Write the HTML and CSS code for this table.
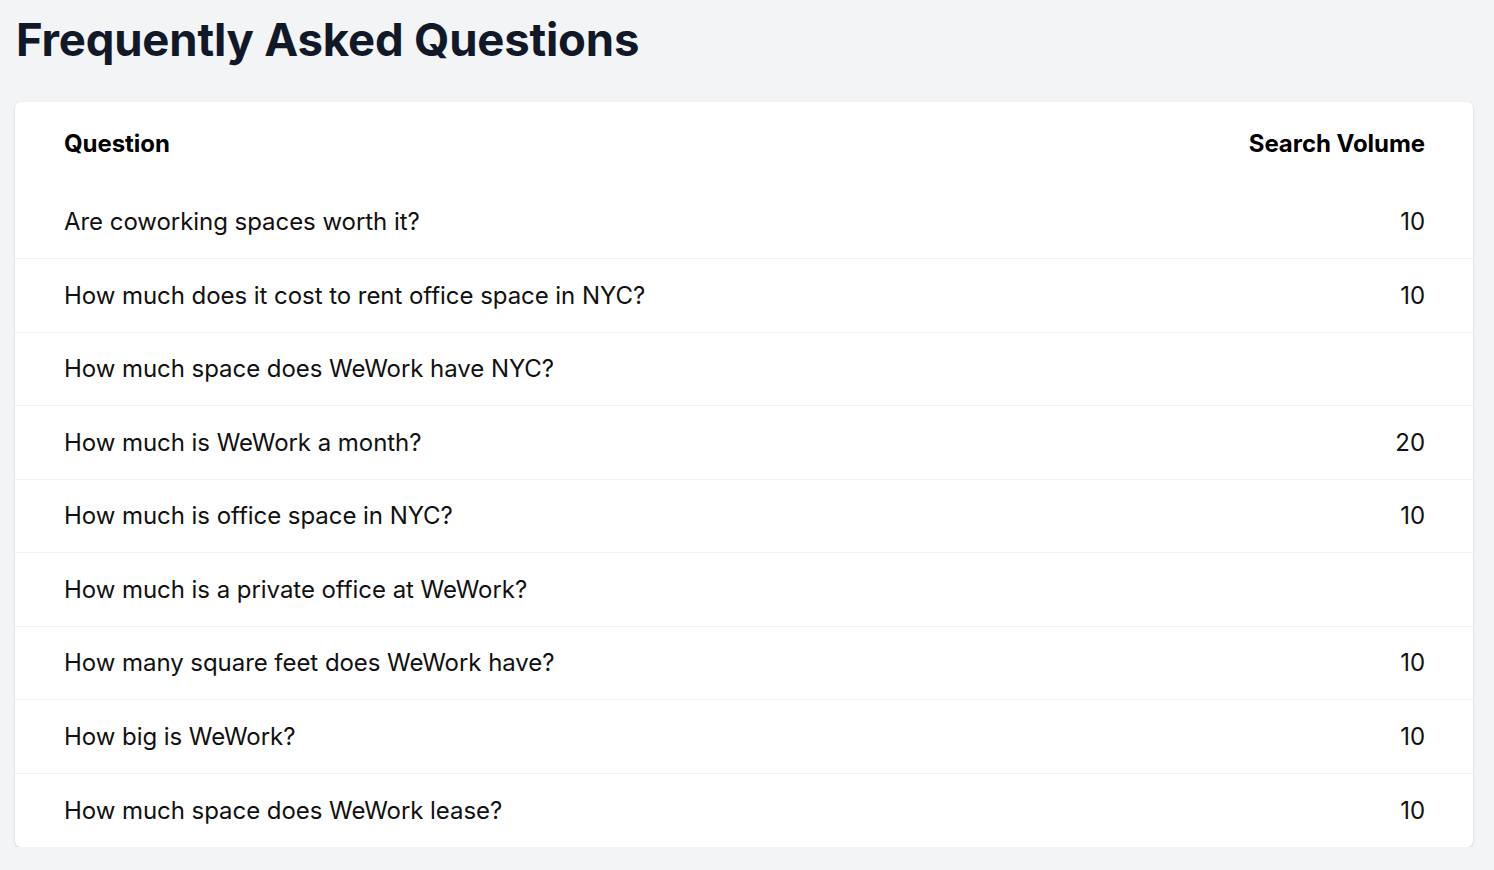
FILE: index.html
```html
<!DOCTYPE html>
<html>
<head>
<meta charset="utf-8">
<link rel="stylesheet" href="styles.css">
</head>
<body>
<h1 class="title">Frequently Asked Questions</h1>
<div class="card">
  <table class="faq">
    <thead>
      <tr><th class="q">Question</th><th class="v">Search Volume</th></tr>
    </thead>
    <tbody>
      <tr><td class="q">Are coworking spaces worth it?</td><td class="v">10</td></tr>
      <tr><td class="q">How much does it cost to rent office space in NYC?</td><td class="v">10</td></tr>
      <tr><td class="q">How much space does WeWork have NYC?</td><td class="v"></td></tr>
      <tr><td class="q">How much is WeWork a month?</td><td class="v">20</td></tr>
      <tr><td class="q">How much is office space in NYC?</td><td class="v">10</td></tr>
      <tr><td class="q">How much is a private office at WeWork?</td><td class="v"></td></tr>
      <tr><td class="q">How many square feet does WeWork have?</td><td class="v">10</td></tr>
      <tr><td class="q">How big is WeWork?</td><td class="v">10</td></tr>
      <tr><td class="q">How much space does WeWork lease?</td><td class="v">10</td></tr>
    </tbody>
  </table>
</div>
</body>
</html>
```

FILE: styles.css
```css
html, body {
  margin: 0;
  padding: 0;
  background: #f3f4f6;
}
body {
  font-family: Inter, "Noto Sans", sans-serif;
  color: #111827;
  padding: 0 21px 0 15px;
}
.title {
  margin: 0;
  padding: 15px 0 0 1px;
  height: 102px;
  box-sizing: border-box;
  font-size: 45.5px;
  line-height: 50px;
  font-weight: 700;
  color: #111827;
  letter-spacing: -0.2px;
}
.card {
  background: #fff;
  border-radius: 6px;
  box-shadow: 0 1px 3px rgba(0,0,0,0.12), 0 1px 2px rgba(0,0,0,0.06);
  overflow: hidden;
}
.faq {
  width: 100%;
  border-collapse: collapse;
  font-size: 24px;
  letter-spacing: -0.05px;
}
.faq th {
  font-weight: 700;
  color: #000;
  height: 83px;
  padding: 0 48px 0 49px;
  box-sizing: border-box;
  vertical-align: middle;
}
.faq td {
  height: 73.5px;
  padding: 0 48px 0 49px;
  box-sizing: border-box;
  vertical-align: middle;
  color: #111;
  border-top: 1px solid #f0f1f3;
}
.faq tbody tr:first-child td {
  border-top: none;
}
.q { text-align: left; }
.v { text-align: right; }
```
